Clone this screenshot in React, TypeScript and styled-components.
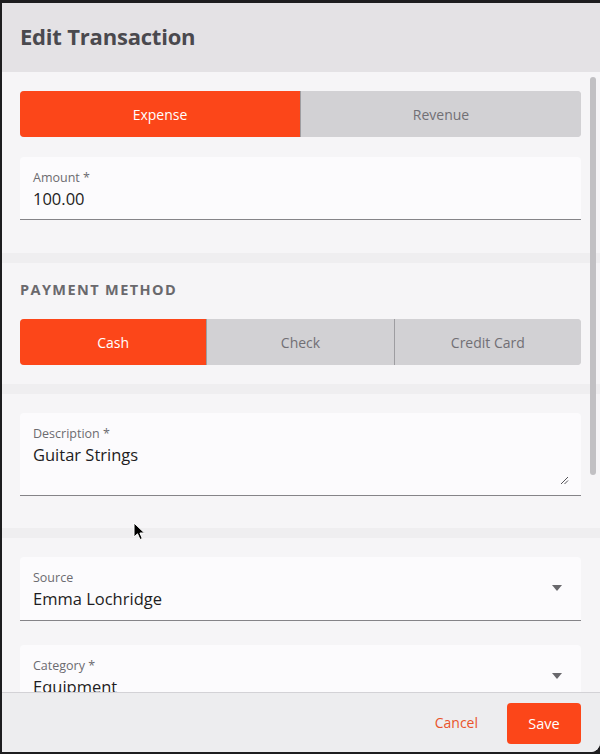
import styled, { createGlobalStyle } from "styled-components";

const GlobalStyle = createGlobalStyle`
  html, body {
    margin: 0;
    padding: 0;
    height: 100%;
    background: #1d1d1f;
  }
  #root {
    height: 100%;
  }
  * {
    box-sizing: border-box;
  }
`;

const ORANGE = "#fc4619";

const Frame = styled.div`
  height: 100vh;
  padding: 3px 0 2px 2px;
  display: flex;
  font-family: "Open Sans", Lato, sans-serif;
`;

const Modal = styled.div`
  flex: 1;
  display: flex;
  flex-direction: column;
  background: #f6f5f7;
  border-radius: 0 0 9px 0;
  overflow: hidden;
  position: relative;
`;

const Header = styled.header`
  height: 69px;
  flex: none;
  display: flex;
  align-items: center;
  padding: 0 18px 4px 18px;
  background: #e4e2e5;
`;

const Title = styled.h2`
  margin: 0;
  font-size: 22px;
  font-weight: 700;
  letter-spacing: -0.2px;
  color: #4a494e;
`;

const Content = styled.div`
  flex: 1;
  min-height: 0;
  overflow: hidden;
  position: relative;
`;

const Section = styled.section<{ $top?: number; $bottom?: number; $gap?: number }>`
  display: flex;
  flex-direction: column;
  gap: ${(p) => p.$gap ?? 20}px;
  padding: ${(p) => p.$top ?? 19}px 19px ${(p) => p.$bottom ?? 33}px 18px;
  & + & {
    border-top: 10px solid #efeef0;
  }
`;

const SectionLabel = styled.div`
  font-size: 14.5px;
  font-weight: 700;
  letter-spacing: 1.4px;
  text-transform: uppercase;
  color: #6a696d;
  line-height: 18px;
  margin: 8px 0 0 0;
`;

const Toggle = styled.div`
  display: flex;
  height: 46px;
  border-radius: 4px;
  overflow: hidden;
  background: #d2d1d4;
`;

const ToggleOption = styled.button<{ $active?: boolean }>`
  flex: 1;
  border: none;
  margin: 0;
  padding: 0;
  font-family: inherit;
  font-size: 14px;
  background: ${(p) => (p.$active ? ORANGE : "#d2d1d4")};
  color: ${(p) => (p.$active ? "#ffffff" : "#716f74")};
  & + & {
    border-left: 1px solid ${(p) => (p.$active ? ORANGE : "#9e9da1")};
  }
`;

const Field = styled.div<{ $height?: number }>`
  position: relative;
  height: ${(p) => p.$height ?? 63}px;
  flex: none;
  background: #fcfbfd;
  border-radius: 4px 4px 0 0;
  border-bottom: 1px solid #858488;
  padding: 13px 13px 0 13px;
`;

const FieldLabel = styled.div`
  font-size: 12.5px;
  line-height: 16px;
  color: #6c6b70;
`;

const FieldValue = styled.div`
  font-size: 16.5px;
  line-height: 22px;
  margin-top: 2px;
  color: #1e1d22;
`;

const Caret = styled.span`
  position: absolute;
  right: 19px;
  top: 28px;
  width: 0;
  height: 0;
  border-left: 5px solid transparent;
  border-right: 5px solid transparent;
  border-top: 6px solid #69686c;
`;

const ResizeGrip = styled.svg`
  position: absolute;
  right: 12px;
  bottom: 10px;
`;

const ScrollThumb = styled.div`
  position: absolute;
  top: 5px;
  right: 4px;
  width: 6px;
  height: 398px;
  border-radius: 3px;
  background: #c1c0c3;
`;

const Footer = styled.footer`
  height: 60px;
  flex: none;
  display: flex;
  align-items: center;
  justify-content: flex-end;
  gap: 13px;
  padding: 0 19px 0 0;
  background: #ededef;
  border-top: 1px solid #d3d2d6;
`;

const TextButton = styled.button`
  border: none;
  background: transparent;
  font-family: inherit;
  font-size: 14px;
  color: #e9542b;
  padding: 0 16px;
  height: 41px;
`;

const PrimaryButton = styled.button`
  border: none;
  border-radius: 4px;
  background: ${ORANGE};
  color: #ffffff;
  font-family: inherit;
  font-size: 14.5px;
  width: 74px;
  height: 41px;
  margin-top: 2px;
`;

const Pointer = styled.svg`
  position: absolute;
  left: 131px;
  top: 519px;
  pointer-events: none;
`;

export default function App() {
  return (
    <>
      <GlobalStyle />
      <Frame>
        <Modal>
          <Header>
            <Title>Edit Transaction</Title>
          </Header>
          <Content>
            <Section>
              <Toggle>
                <ToggleOption $active>Expense</ToggleOption>
                <ToggleOption>Revenue</ToggleOption>
              </Toggle>
              <Field>
                <FieldLabel>Amount *</FieldLabel>
                <FieldValue>100.00</FieldValue>
              </Field>
            </Section>
            <Section $top={10} $bottom={19} $gap={20}>
              <SectionLabel>Payment Method</SectionLabel>
              <Toggle>
                <ToggleOption $active>Cash</ToggleOption>
                <ToggleOption>Check</ToggleOption>
                <ToggleOption>Credit Card</ToggleOption>
              </Toggle>
            </Section>
            <Section $bottom={32}>
              <Field $height={83}>
                <FieldLabel>Description *</FieldLabel>
                <FieldValue>Guitar Strings</FieldValue>
                <ResizeGrip width="9" height="9" viewBox="0 0 9 9">
                  <path d="M1 8 L8 1 M4.5 8 L8 4.5" stroke="#555459" strokeWidth="1" fill="none" />
                </ResizeGrip>
              </Field>
            </Section>
            <Section $gap={24}>
              <Field $height={64}>
                <FieldLabel>Source</FieldLabel>
                <FieldValue>Emma Lochridge</FieldValue>
                <Caret />
              </Field>
              <Field $height={64}>
                <FieldLabel>Category *</FieldLabel>
                <FieldValue>Equipment</FieldValue>
                <Caret />
              </Field>
            </Section>
            <ScrollThumb />
          </Content>
          <Footer>
            <TextButton>Cancel</TextButton>
            <PrimaryButton>Save</PrimaryButton>
          </Footer>
          <Pointer width="14" height="20" viewBox="0 0 14 20">
            <path d="M1 1 L1 15 L4.5 11.8 L7 17.5 L9.3 16.5 L6.9 11 L11.5 11 Z" fill="#000" stroke="#fff" strokeWidth="1" strokeLinejoin="round" />
          </Pointer>
        </Modal>
      </Frame>
    </>
  );
}
